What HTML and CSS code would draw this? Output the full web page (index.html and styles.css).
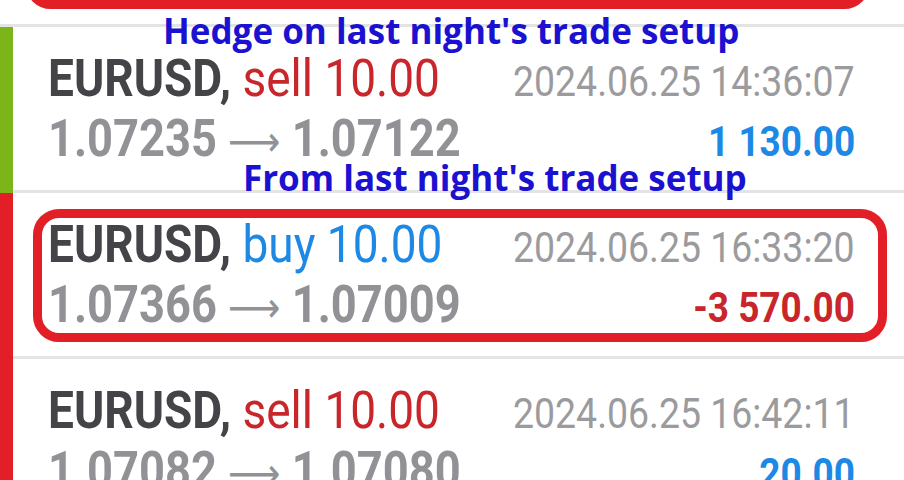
FILE: index.html
```html
<!DOCTYPE html>
<html lang="en">
<head>
    <meta charset="UTF-8">
    <meta name="viewport" content="width=device-width, initial-scale=1.0">
    <title>Trade history</title>
    <link rel="stylesheet" href="styles.css">
</head>
<body>
    <div class="history">
        <div class="prev-row">
            <div class="mark mark-top"></div>
        </div>

        <div class="trade">
            <div class="side profit"></div>
            <div class="info">
                <div class="line">
                    <span class="wide left deal"><b class="symbol">EURUSD,</b> <span class="sell">sell 10.00</span></span>
                    <span class="wide right time">2024.06.25 14:36:07</span>
                </div>
                <div class="line">
                    <span class="wide left prices">1.07235 <span class="arrow">&#x27F6;</span> 1.07122</span>
                    <span class="wide right result plus">1 130.00</span>
                </div>
            </div>
        </div>

        <div class="trade">
            <div class="side loss"></div>
            <div class="info">
                <div class="line">
                    <span class="wide left deal"><b class="symbol">EURUSD,</b> <span class="buy">buy 10.00</span></span>
                    <span class="wide right time">2024.06.25 16:33:20</span>
                </div>
                <div class="line">
                    <span class="wide left prices">1.07366 <span class="arrow">&#x27F6;</span> 1.07009</span>
                    <span class="wide right result minus">-3 570.00</span>
                </div>
            </div>
            <div class="mark mark-row"></div>
        </div>

        <div class="trade">
            <div class="side loss"></div>
            <div class="info">
                <div class="line">
                    <span class="wide left deal"><b class="symbol">EURUSD,</b> <span class="sell">sell 10.00</span></span>
                    <span class="wide right time">2024.06.25 16:42:11</span>
                </div>
                <div class="line">
                    <span class="wide left prices">1.07082 <span class="arrow">&#x27F6;</span> 1.07080</span>
                    <span class="wide right result plus">20.00</span>
                </div>
            </div>
        </div>

        <span class="note note-hedge">Hedge on last night's trade setup</span>
        <span class="note note-from">From last night's trade setup</span>
    </div>
</body>
</html>
```

FILE: styles.css
```css
body {
    margin: 0;
    background: #fff;
    font-family: Roboto, "Liberation Sans", sans-serif;
    overflow: hidden;
}

.history {
    position: relative;
    width: 904px;
}

.prev-row {
    position: relative;
    height: 24px;
    border-bottom: 3px solid #e4e4e4;
}

.trade {
    position: relative;
    display: flex;
    height: 166px;
}

.side {
    width: 13px;
    flex: none;
}
.side.profit { background: #7cb518; }
.side.loss { background: #e21f26; }

.info {
    flex: 1;
    min-width: 0;
    padding: 22px 49px 0 35px;
    border-bottom: 3px solid #e4e4e4;
}

.line {
    display: flex;
    align-items: baseline;
    height: 60px;
    line-height: 60px;
    white-space: nowrap;
}

/* condensed look of the terminal font */
.wide {
    display: inline-block;
    transform: scaleX(0.87);
}
.wide.left {
    flex: 0 1 auto;
    min-width: 0;
    transform-origin: left center;
}
.wide.right {
    flex: none;
    margin-left: auto;
    transform-origin: right center;
}
.wide.deal { transform: scaleX(0.885); }

.line .left { font-size: 52px; }

.symbol {
    color: #434348;
    font-weight: 700;
}
.sell { color: #c8262b; }
.buy { color: #1e88e5; }

.time {
    font-size: 43px;
    color: #9b9b9e;
}

.prices {
    font-weight: 700;
    color: #929296;
}
.arrow {
    font-family: "DejaVu Sans", sans-serif;
    font-weight: 400;
    font-size: 42px;
}

.result {
    font-size: 42.5px;
    font-weight: 700;
}
.result.plus { color: #1e88e5; }
.result.minus { color: #c8262b; }

/* red highlight frames drawn over the list */
.mark {
    position: absolute;
    border: 9px solid #e21f26;
    border-radius: 26px;
}
.mark-top {
    left: 25px;
    right: 34px;
    bottom: 15px;
    height: 120px;
}
.mark-row {
    left: 33px;
    right: 17px;
    top: 16px;
    height: 115px;
}

.note {
    position: absolute;
    font-family: "Open Sans", sans-serif;
    font-weight: 700;
    font-size: 35px;
    line-height: 40px;
    color: #1a12d0;
    white-space: nowrap;
}
.note-hedge {
    left: 163px;
    top: 11px;
}
.note-from {
    left: 243px;
    top: 158px;
}
```
